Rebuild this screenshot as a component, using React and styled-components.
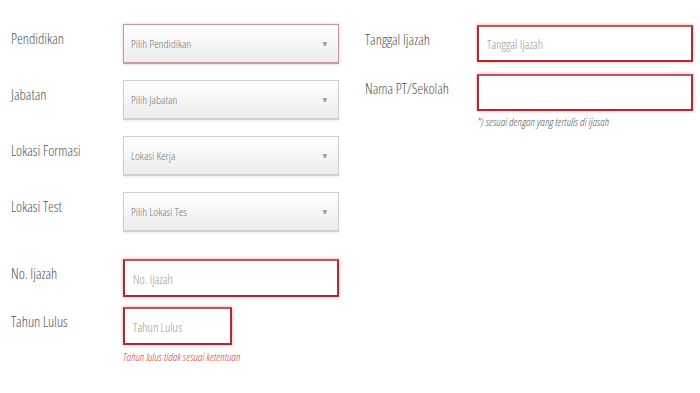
import React from 'react'
import styled, { createGlobalStyle } from 'styled-components'

const GlobalStyle = createGlobalStyle`
  body {
    margin: 0;
    background: #fff;
    font-family: "Open Sans", "Liberation Sans", sans-serif;
  }
`

const leftRows = [
  { label: 'Pendidikan', kind: 'select', text: 'Pilih Pendidikan', tone: 'soft' },
  { label: 'Jabatan', kind: 'select', text: 'Pilih Jabatan' },
  { label: 'Lokasi Formasi', kind: 'select', text: 'Lokasi Kerja' },
  { label: 'Lokasi Test', kind: 'select', text: 'Pilih Lokasi Tes' },
]

function App() {
  return (
    <Page>
      <GlobalStyle />
      <Column>
        <Selects>
          {leftRows.map((r) => (
            <Row key={r.label}>
              <Label>{r.label}</Label>
              <Select tone={r.tone}>
                <SelectText>{r.text}</SelectText>
                <Arrow>▼</Arrow>
              </Select>
            </Row>
          ))}
        </Selects>
        <Row gap={10} top={27}>
          <Label>No. Ijazah</Label>
          <Input width={216} placeholder="No. Ijazah" />
        </Row>
        <Row>
          <Label>Tahun Lulus</Label>
          <Field>
            <Input width={109} placeholder="Tahun Lulus" />
            <ErrorText>Tahun lulus tidak sesuai ketentuan</ErrorText>
          </Field>
        </Row>
      </Column>
      <Column right>
        <Row gap={12}>
          <Label>Tanggal Ijazah</Label>
          <Input width={216} h={37} placeholder="Tanggal Ijazah" />
        </Row>
        <Row>
          <Label>Nama PT/Sekolah</Label>
          <Field>
            <Input width={216} h={37} />
            <Note>*) sesuai dengan yang tertulis di ijasah</Note>
          </Field>
        </Row>
      </Column>
    </Page>
  )
}

export default App

const Page = styled.div`
  width: 700px;
  height: 393px;
  display: flex;
  padding: 24px 0 0 11px;
  box-sizing: border-box;
  gap: 26px;
`

const Column = styled.div`
  display: flex;
  flex-direction: column;
  width: 328px;
  margin-top: ${(p) => (p.right ? '1px' : '0')};
`

const Selects = styled.div`
  display: flex;
  flex-direction: column;
  gap: 16px;
`

const Row = styled.div`
  display: flex;
  align-items: flex-start;
  margin-bottom: ${(p) => (p.gap ? p.gap + 'px' : '0')};
  margin-top: ${(p) => (p.top ? p.top + 'px' : '0')};
`

const Label = styled.div`
  width: 112px;
  flex-shrink: 0;
  padding-top: 5px;
  font-size: 14.5px;
  font-weight: 300;
  font-stretch: 75%;
  color: #555;
  line-height: 20px;
`

const Field = styled.div`
  display: flex;
  flex-direction: column;
`

const Select = styled.div`
  width: 216px;
  height: 40px;
  box-sizing: border-box;
  display: flex;
  align-items: center;
  justify-content: space-between;
  padding: 0 11px 0 7px;
  background: linear-gradient(#ffffff, #ececec);
  border: 1px solid ${(p) => (p.tone === 'soft' ? '#c99a9c' : '#cfcfcf')};
  border-bottom-width: 2px;
  box-shadow: ${(p) =>
    p.tone === 'soft'
      ? '0 0 3px rgba(215, 130, 130, 0.45)'
      : '0 1px 2px rgba(0, 0, 0, 0.08)'};
`

const SelectText = styled.span`
  font-size: 11.5px;
  font-weight: 300;
  font-stretch: 75%;
  color: #777;
`

const Arrow = styled.span`
  font-size: 6px;
  color: #999;
  font-family: "DejaVu Sans", sans-serif;
`

const Input = styled.input`
  width: ${(p) => p.width}px;
  height: ${(p) => p.h || 38}px;
  box-sizing: border-box;
  border: 2px solid #a82d35;
  border-top-color: #c4565b;
  box-shadow: 0 0 3px rgba(220, 70, 70, 0.55);
  padding: 2px 8px 0;
  outline: none;
  background: #fff;
  font-family: "Open Sans", "Liberation Sans", sans-serif;
  font-size: 12.5px;
  font-weight: 300;
  font-stretch: 75%;
  color: #555;

  &::placeholder {
    color: #999;
  }
`

const ErrorText = styled.div`
  margin-top: 4px;
  font-size: 11.5px;
  font-style: italic;
  font-weight: 300;
  font-stretch: 75%;
  color: #d33a3a;
`

const Note = styled.div`
  margin-top: 3px;
  font-size: 11.5px;
  font-style: italic;
  font-weight: 300;
  font-stretch: 75%;
  color: #555;
`
